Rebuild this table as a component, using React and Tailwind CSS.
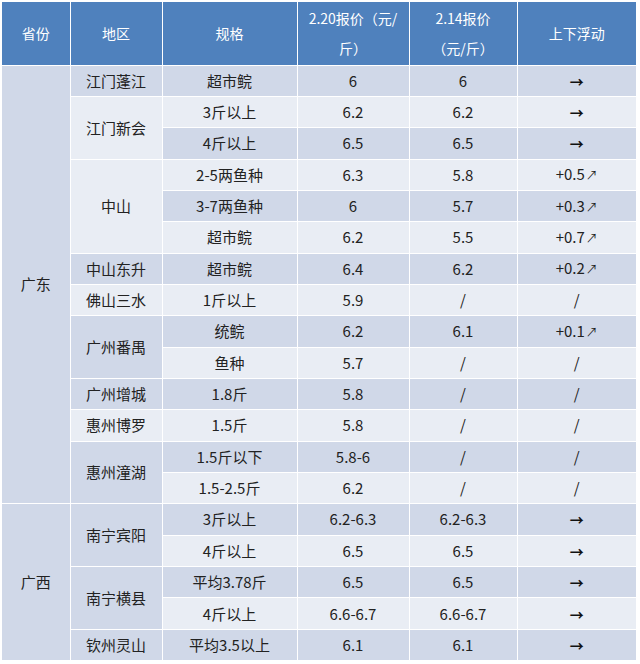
const rows = [
  { prov: '广东', provSpan: 14, region: '江门蓬江', regionSpan: 1, spec: '超市鲩', p1: '6', p2: '6', diff: '→' },
  { region: '江门新会', regionSpan: 2, spec: '3斤以上', p1: '6.2', p2: '6.2', diff: '→' },
  { spec: '4斤以上', p1: '6.5', p2: '6.5', diff: '→' },
  { region: '中山', regionSpan: 3, spec: '2-5两鱼种', p1: '6.3', p2: '5.8', diff: '+0.5↗' },
  { spec: '3-7两鱼种', p1: '6', p2: '5.7', diff: '+0.3↗' },
  { spec: '超市鲩', p1: '6.2', p2: '5.5', diff: '+0.7↗' },
  { region: '中山东升', regionSpan: 1, spec: '超市鲩', p1: '6.4', p2: '6.2', diff: '+0.2↗' },
  { region: '佛山三水', regionSpan: 1, spec: '1斤以上', p1: '5.9', p2: '/', diff: '/' },
  { region: '广州番禺', regionSpan: 2, spec: '统鲩', p1: '6.2', p2: '6.1', diff: '+0.1↗' },
  { spec: '鱼种', p1: '5.7', p2: '/', diff: '/' },
  { region: '广州增城', regionSpan: 1, spec: '1.8斤', p1: '5.8', p2: '/', diff: '/' },
  { region: '惠州博罗', regionSpan: 1, spec: '1.5斤', p1: '5.8', p2: '/', diff: '/' },
  { region: '惠州潼湖', regionSpan: 2, spec: '1.5斤以下', p1: '5.8-6', p2: '/', diff: '/' },
  { spec: '1.5-2.5斤', p1: '6.2', p2: '/', diff: '/' },
  { prov: '广西', provSpan: 5, region: '南宁宾阳', regionSpan: 2, spec: '3斤以上', p1: '6.2-6.3', p2: '6.2-6.3', diff: '→' },
  { spec: '4斤以上', p1: '6.5', p2: '6.5', diff: '→' },
  { region: '南宁横县', regionSpan: 2, spec: '平均3.78斤', p1: '6.5', p2: '6.5', diff: '→' },
  { spec: '4斤以上', p1: '6.6-6.7', p2: '6.6-6.7', diff: '→' },
  { region: '钦州灵山', regionSpan: 1, spec: '平均3.5以上', p1: '6.1', p2: '6.1', diff: '→' },
];

function Diff({ value }) {
  if (value === '→') {
    return <span className="font-bold text-[14px] text-[#111]">→</span>;
  }
  if (value.endsWith('↗')) {
    return (
      <span>
        {value.slice(0, -1)}
        <span className="text-[12px] ml-[1px]">↗</span>
      </span>
    );
  }
  return <span>{value}</span>;
}

export default function App() {
  const td = 'border border-white text-center align-middle h-[31.35px] p-0';
  return (
    <div className="bg-white w-[640px] h-[664px] pt-[2px] pl-[2px]" style={{ fontFamily: '"Noto Sans CJK SC", "Noto Sans", sans-serif' }}>
      <table className="border-collapse table-fixed w-[634px] text-[15px] leading-[20px] text-[#222]">
        <colgroup>
          <col className="w-[68px]" />
          <col className="w-[92px]" />
          <col className="w-[135px]" />
          <col className="w-[112px]" />
          <col className="w-[108px]" />
          <col className="w-[119px]" />
        </colgroup>
        <thead>
          <tr className="bg-[#4f81bd] text-white">
            <th className="border border-white border-t-0 border-l-0 font-normal h-[63px] text-[14px]">省份</th>
            <th className="border border-white border-t-0 font-normal text-[14px]">地区</th>
            <th className="border border-white border-t-0 font-normal text-[14px]">规格</th>
            <th className="border border-white border-t-0 font-normal text-[14px] leading-[30px]">
              2.20报价（元/<br />斤）
            </th>
            <th className="border border-white border-t-0 font-normal text-[14px] leading-[30px]">
              2.14报价<br />（元/斤）
            </th>
            <th className="border border-white border-t-0 border-r-0 font-normal text-[14px]">上下浮动</th>
          </tr>
        </thead>
        <tbody>
          {rows.map((r, i) => {
            const bg = i % 2 === 0 ? 'bg-[#d0d8e8]' : 'bg-[#e9edf4]';
            return (
              <tr key={i} className={bg}>
                {r.prov && (
                  <td rowSpan={r.provSpan} className={`${td} border-l-0 bg-[#d0d8e8]`}>
                    {r.prov}
                  </td>
                )}
                {r.region && (
                  <td rowSpan={r.regionSpan} className={td}>
                    {r.region}
                  </td>
                )}
                <td className={td}>{r.spec}</td>
                <td className={td}>{r.p1}</td>
                <td className={td}>{r.p2}</td>
                <td className={`${td} border-r-0`}>
                  <Diff value={r.diff} />
                </td>
              </tr>
            );
          })}
        </tbody>
      </table>
    </div>
  );
}
